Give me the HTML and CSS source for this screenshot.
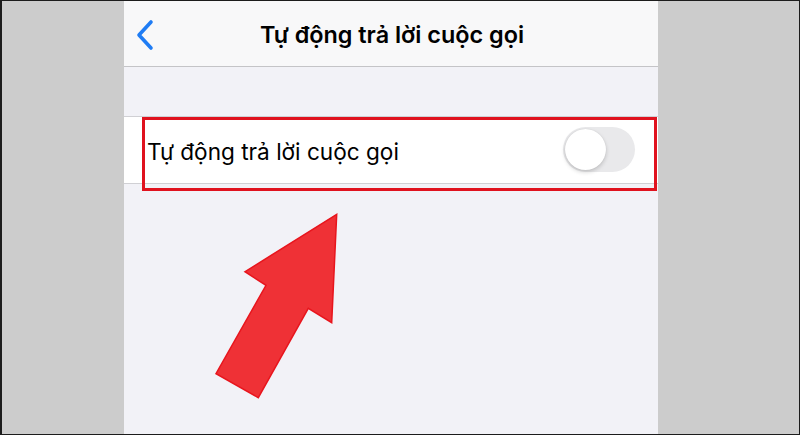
FILE: index.html
```html
<!DOCTYPE html>
<html>
<head>
    <meta charset="utf-8">
    <title>Tự động trả lời cuộc gọi</title>
    <link rel="stylesheet" href="styles.css">
</head>
<body>
    <div class="frame">
        <div class="side"></div>
        <div class="screen">
            <div class="nav">
                <svg class="back" width="20" height="32" viewBox="0 0 20 32">
                    <polyline points="15,3 3,16 15,29" fill="none" stroke="#1f7cf4" stroke-width="3.6" stroke-linecap="round" stroke-linejoin="round"/>
                </svg>
                <div class="title">Tự động trả lời cuộc gọi</div>
            </div>
            <div class="group">
                <div class="row">
                    <span class="label">Tự động trả lời cuộc gọi</span>
                    <div class="switch"><div class="knob"></div></div>
                </div>
            </div>
            <!-- highlight box and arrow drawn over the list -->
            <div class="mark"></div>
            <svg class="arrow" width="140" height="200" viewBox="200 200 140 200">
                <polygon points="336.7,213.3 331.7,321.7 308.3,307.3 258.3,396.7 216,372.7 266,284.3 245,270.7" fill="#ef3136" stroke="#e8151d" stroke-width="1.5" stroke-linejoin="miter"/>
            </svg>
        </div>
        <div class="side"></div>
    </div>
</body>
</html>
```

FILE: styles.css
```css
body { margin: 0; font-family: Inter, "Noto Sans", sans-serif; }
.frame { display: flex; width: 800px; height: 435px; box-sizing: border-box; border: 1px solid #1c1c1c; border-left-width: 2px; background: #cccccc; }
.side { width: 122px; background: #cccccc; }
.side:last-child { flex: 1; }
.screen { position: relative; width: 534px; background: #f2f2f7; }
.nav { position: relative; height: 65px; background: #f8f8f9; border-bottom: 1px solid #c4c4c7; display: flex; align-items: center; justify-content: center; }
.back { position: absolute; left: 12px; top: 18px; }
.title { font-size: 23.4px; font-weight: 600; color: #000; margin-left: 2px; margin-top: 2px; }
.group { margin-top: 49px; background: #fff; border-top: 1px solid #d0d0d4; border-bottom: 1px solid #d0d0d4; }
.row { height: 66px; display: flex; align-items: center; justify-content: space-between; padding: 0 23px; }
.label { font-size: 22.6px; color: #000; margin-top: 2px; }
.switch { width: 72px; height: 45px; border-radius: 23px; background: #e9e9eb; position: relative; margin-top: -2px; }
.knob { position: absolute; left: 2px; top: 2px; width: 41px; height: 41px; border-radius: 50%; background: #fff; box-shadow: 0 2px 4px rgba(0,0,0,0.18), 0 0 1px rgba(0,0,0,0.12); }
.mark { position: absolute; left: 18px; top: 116px; width: 515px; height: 74px; box-sizing: border-box; border: 3px solid #e0121e; }
.arrow { position: absolute; left: 76px; top: 200px; }
```
